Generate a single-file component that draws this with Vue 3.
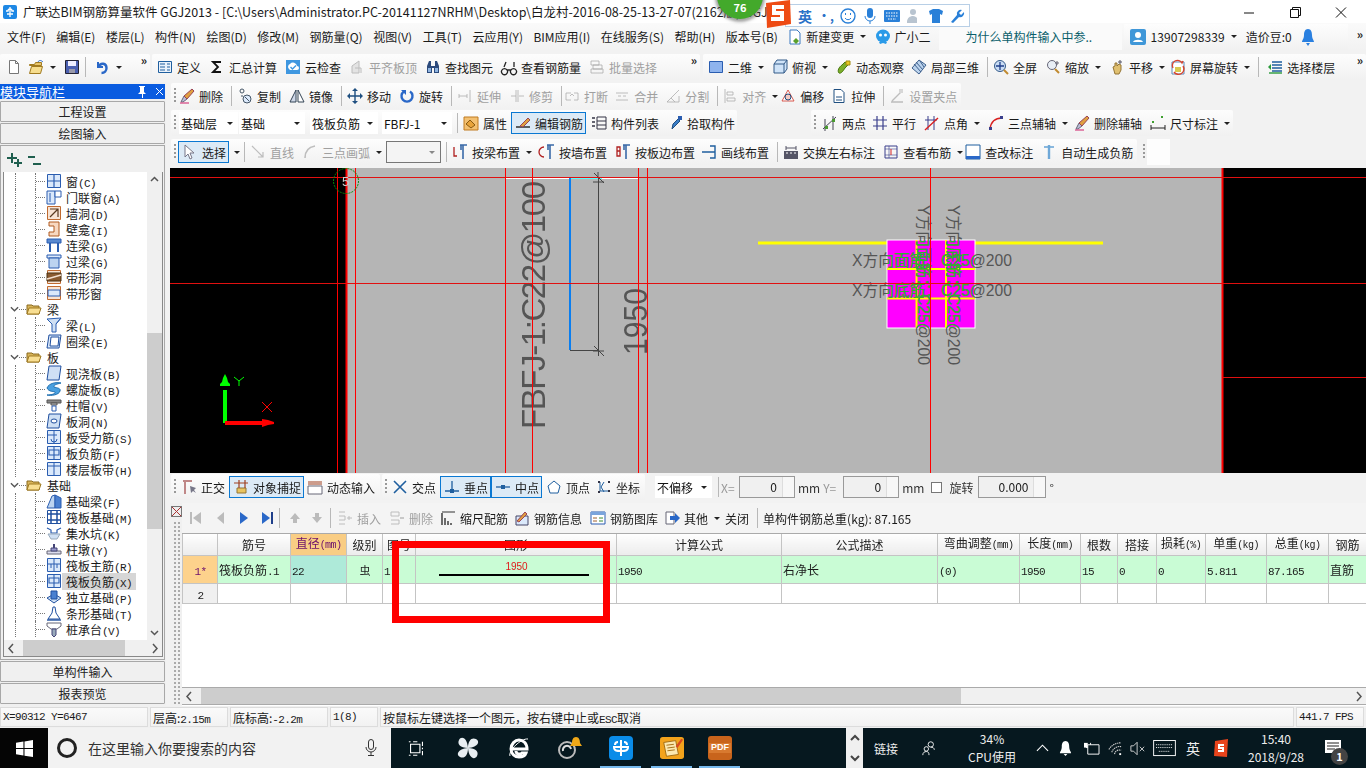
<script setup>
import { h } from 'vue'

// 16x16 icon bodies, kept as strings so the toolbars can be plain data
const ln = (d, c = '#335', w = 1) => `<path d="${d}" fill="none" stroke="${c}" stroke-width="${w}"/>`
const fl = (d, c, s = 'none') => `<path d="${d}" fill="${c}" stroke="${s}"/>`

const icons = {
  newdoc: fl('M3.5 1.5h6l3 3v10h-9z', '#fff', '#777') + ln('M9.5 1.5v3h3', '#777'),
  open: fl('M1.5 5.5h5l1-2h6v3h-12z', '#e8c46a', '#a07a20') + fl('M1.5 14.5l2-7h11l-2 7z', '#f6dd8e', '#a07a20') + ln('M10 3c1-2 3-2 5 0', '#2a68c8'),
  save: fl('M1.5 1.5h13v13h-13z', '#4a5fb0', '#223') + fl('M4 2h8v5H4z', '#eef') + fl('M5 10h6v4H5z', '#99a'),
  undo: ln('M4 3v5h5', '#2a68c8', 2) + ln('M4.5 8c2-5 8-4 8 1 0 3-2 5-5 5', '#2a68c8', 2.4),
  def: fl('M1.5 2.5h13v11h-13z', '#eaf2fb', '#1f5f9f') + ln('M3 5h5M3 8h5M3 11h5M10 5h3M10 8h3M10 11h3', '#1f5f9f'),
  sigma: ln('M12 3H4l5 5-5 5h8', '#111', 1.8),
  cloud: fl('M1 1h14v14H1z', '#3f97e0') + fl('M4 10a3 3 0 0 1 1-5 4 4 0 0 1 7 2 2 2 0 0 1 0 4H5z', '#fff') + ln('M5.5 8l2 2 3.5-3.5', '#3f97e0', 1.4),
  flat: fl('M3 7l7-5v12H3z', '#ddd', '#aaa') + ln('M6 9h6v5', '#aaa'),
  binoc: fl('M2 7l2-5h2v5h4V2h2l2 5v7H9V9H7v5H2z', '#2c4a7c') + fl('M3 9h3v4H3zM10 9h3v4h-3z', '#8fb4e0'),
  glass: ln('M1 11a3 3 0 1 0 5 0 3 3 0 0 0-5 0M10 11a3 3 0 1 0 5 0 3 3 0 0 0-5 0M6 11h4M3 8l2-5M13 8V3', '#222', 1.3),
  batch: ln('M2 2h8v4H2zM4 6h9v4H4zM2 10h12v4H2z', '#aaa'),
  two: fl('M1.5 2.5h13v11h-13z', '#8fb4ee', '#2a5db0'),
  top: fl('M2 5l3-4h10v9l-3 4H2z', '#cfe3f8', '#335a88') + ln('M2 5h10v9M12 5l3-4', '#335a88'),
  orbit: fl('M3 14c-2-2 0-6 3-8l3-3 3 3-3 3c-2 3-4 6-6 5z', '#7cae2a', '#4a7a10') + fl('M10 2h4v4h-4z', '#e8c820', '#a08a10'),
  local: fl('M8 1l7 5-7 9-7-6z', '#bcd4ee', '#3d5f8c') + ln('M5 3l7 8M9 2l4 6M3 5l7 8', '#3d5f8c'),
  full: `<circle cx="7" cy="7" r="5.5" fill="#c9dcf4" stroke="#335a88"/>` + ln('M7 3v8M3 7h8', '#1f3f8a', 1.3) + ln('M11 11l4 4', '#c08a30', 2),
  zoom: `<circle cx="7" cy="6" r="4.5" fill="#e8eef6" stroke="#667"/>` + ln('M10 10l4 4', '#c08a30', 2) + ln('M12 2v4M10 4h4', '#667'),
  pan: fl('M4 8l2-1V4l2 0v3l2-2 2 1v5l-2 4H6z', '#e0c070', '#947434') + ln('M11 1v4M9 3h4', '#556'),
  rot: fl('M2 3h12v12H2z', '#fff', '#5b88b8') + fl('M5 8h6v5H5z', '#d8c850') + ln('M3 9a5 5 0 0 1 9-5l1-2M13 7a5 5 0 0 1-9 6', '#d8432c', 1.4),
  floor: ln('M5 3h10M5 6h10M5 9h10M5 12h10', '#1f5f9f', 1.6) + fl('M1 8l3-3v6z', '#2a9a3a') + ln('M2 14h13', '#2a9a3a', 1.4),
  erase: fl('M2 14l3-6 3 3-4 3z', '#b9bcd8', '#667') + fl('M5 8l8-7 2 2-7 8z', '#e0a040', '#945') + ln('M1 15h9', '#d85a90', 1.4),
  copy: `<circle cx="5" cy="3" r="2" fill="none" stroke="#456"/><circle cx="10" cy="11" r="4" fill="#dbe9fb" stroke="#456"/>` + ln('M8 9l4 4M4 8h2', '#456'),
  mirror: fl('M7 2v12H1z', '#cfd8e8', '#345') + fl('M9 2v12h6z', '#fff', '#345'),
  move: ln('M8 1v14M1 8h14', '#1f4f80', 1.4) + fl('M8 0l3 3H5zM8 16l3-3H5zM0 8l3-3v6zM16 8l-3-3v6z', '#1f4f80'),
  rotate: ln('M5 3.5a5.5 5.5 0 1 0 6 0', '#2a68c8', 2.4) + fl('M2 2h5v5z', '#2a68c8'),
  extend: ln('M2 8h8M13 2v12M10 6v4M2 6v4', '#aaa'),
  trim: ln('M2 8h5M10 8h5M7 2v12M9 2v12', '#aaa'),
  brk: ln('M2 5h5M10 5h4M2 12h5M10 12h4M2 5v7M14 5v7M6 8l2-2 2 2', '#aaa'),
  merge: ln('M2 5h12M2 12h12M4 8h3M9 8h3', '#aaa'),
  split: ln('M2 14L14 2M2 14h12v-6M6 10l4 4', '#aaa'),
  align: ln('M3 1v14M5 4h6v3H5zM5 10h8v3H5z', '#aaa'),
  offset: fl('M8 2l6 11H2z', '#fff', '#d85a50') + `<circle cx="8" cy="9" r="3" fill="#f4c8c0" stroke="#1f4f80"/>`,
  stretch: fl('M3 1.5h7l3 3v10H3z', '#fff', '#1f4f80') + ln('M5 9h6M5 12h6', '#1f4f80', 1),
  grips: ln('M3 13L13 3M2 14h12', '#aaa', 1.4) + fl('M10 1h4v4h-4z', '#ccc'),
  attr: fl('M1 2h14v13H1z', '#f3c071', '#c07a20') + fl('M3 9l4-4 5 5-4 3z', '#e8a33a', '#8a5a10'),
  editbar: ln('M1 12h14', '#222', 1.4) + fl('M5 11l8-8 2 2-7 7z', '#e0a040', '#945'),
  list: ln('M6 2h9v12H6zM6 6h9M6 10h9', '#334') + ln('M1 3h3M1 7h3M1 11h3', '#334', 1.6),
  pick: fl('M6 9l5-5 2 2-5 5-3 3z', '#3b7ec8', '#1f4f80') + fl('M11 1h4v4h-4z', '#2a5db0'),
  twopt: ln('M1 14L14 2M11 1v14M3 4v12', '#445') + fl('M3 11h3v3H3zM10 4h3v3h-3z', '#4a9a30'),
  parallel: ln('M1 5h14M1 11h14M5 1v14M11 1v14', '#3a3f8c', 1.2),
  angle: ln('M1 5h12M4 1v14M10 1v14', '#3a3f8c') + ln('M1 15L14 3', '#d82020', 1.4),
  arc3: ln('M2 14C3 6 8 3 14 3', '#d82020', 1.4) + fl('M1 12h3v3H1zM12 1h3v3h-3z', '#3a3f8c'),
  dim: ln('M1 13h14M1 10v5M15 10v5', '#222') + fl('M2 6h2v2H2zM11 1h2v2h-2z', '#3fa030'),
  pointer: fl('M3 1v12l3-3 2 5 2-1-2-5h4z', '#fff', '#778'),
  lineg: ln('M2 2l11 11M13 8v5H8', '#aaa', 1.2),
  arcg: ln('M3 14C3 7 7 3 13 2', '#aaa', 1.6),
  beamb: ln('M2 3v9h3', '#b02020', 1.3) + ln('M8 1h7M11 1v14M9 1v5', '#3a6aa8', 1.6),
  wallb: ln('M5 3a5 5 0 0 0 0 10', '#b02020', 1.3) + ln('M8 1h7M11 1v14M9 1v5', '#3a6aa8', 1.6),
  plateb: ln('M2 3h3v9H2zM2 7h3', '#b02020', 1.3) + ln('M8 1h7M11 1v14M9 1v5', '#3a6aa8', 1.6),
  lineb: ln('M1 8h13M9 2h5v12H9', '#1f5f9f', 1.4),
  swap: fl('M1 7h14v8H1z', '#556') + ln('M3 9h2M7 9h2M11 9h2', '#fff') + ln('M3 4h10M3 2v4M13 2v4', '#556'),
  see: ln('M2 2h12v12H2z', '#3a3f8c') + ln('M2 5h12M2 11h12M6 2v12', '#3a3f8c', .6) + ln('M8 5v6', '#d82020'),
  abc: fl('M1 1h14v14H1z', '#fff', '#1f5f9f') + fl('M1 12h14v3H1z', '#2a68c8'),
  auto: ln('M8 1v14', '#6fa8d8', 2.4) + ln('M3 3h10', '#6fa8d8', 1.6),
  ortho: ln('M2 2h9M4 2v13', '#c08888', 2) + fl('M9 7l1 7 2-2 3 2-2-3 2-2z', '#778'),
  snap: fl('M4 9h9v5H4z', '#e8c460', '#947434') + ln('M6 1v8M12 1v8M1 4h14', '#a04020', 1.2),
  dyn: ln('M1 3h14M1 5h14', '#a04020', 1.2) + fl('M1 7h14v8H1z', '#fff', '#667'),
  cross: ln('M2 2l12 12M14 2L2 14', '#1f5f9f', 1.6),
  perp: ln('M8 2v10M1 12h14', '#1f5f9f', 1.3) + fl('M6 10h4v4H6z', '#1f5f9f'),
  mid: ln('M1 8h14', '#1f5f9f', 1.3) + fl('M6 6h4v4H6z', '#1f5f9f'),
  vertex: fl('M8 2l6 5-2 7H4L2 7z', '#fff', '#1f5f9f'),
  coord: ln('M4 3v9h9M8 3l-3 5 3 5', '#1f5f9f') + fl('M2 2h2v2H2zM12 2h2v2h-2zM12 11h2v2h-2zM2 12h2v2H2z', '#334'),
  first: fl('M13 2v12L5 8z', '#bbb') + fl('M2 2h2v12H2z', '#bbb'),
  prev: fl('M12 2v12L5 8z', '#bbb'),
  next: fl('M4 2v12l8-6z', '#2a68c8'),
  last: fl('M2 2v12l8-6z', '#2a68c8') + fl('M11 2h2v12h-2z', '#1f3f8a'),
  up: fl('M8 3l5 6H10v4H6V9H3z', '#bbb'),
  down: fl('M8 13L3 7h3V3h4v4h3z', '#bbb'),
  ins: ln('M2 2h6M2 14h6M2 6h6v4H2', '#aaa') + ln('M10 8h5M12 6v4', '#aaa'),
  del: ln('M2 2h8v4H2zM2 10h8v4H2', '#aaa') + ln('M11 8h4', '#aaa', 1.6),
  scale: ln('M2 3v12M5 8v7M8 11v4M11 13v2', '#333', 1.4) + ln('M2 2h13', '#333', 1),
  info: fl('M2 6h12v9H2z', '#dbe9fb', '#446') + fl('M3 11l8-9 2 2-8 8z', '#e0a040', '#945'),
  lib: fl('M1 2h14v12H1z', '#fff', '#2a5db0') + fl('M1 2h14v3H1z', '#7aa4dc') + ln('M3 8h4M3 11h4', '#a06030') + ln('M9 8h4M9 11h4', '#3a8a30'),
  other: fl('M2 2h8v12H2z', '#fff', '#667') + fl('M6 6h5V3l5 5-5 5v-3H6z', '#2a68c8')
}

// one toolbar item: tool, separator, grip, combo or caret
const renderItem = (it) => {
  if (it === '|') return h('i', { class: 'sep' })
  if (it === ':') return h('i', { class: 'grip' })
  if (it === 'v') return h('i', { class: 'caret solo' })
  if (it === '»') return h('span', { class: 'band-more' }, '»')
  if (it.combo !== undefined) {
    return h('span', { class: ['combo', it.cls], style: { width: it.w + 'px', marginLeft: (it.ml || 0) + 'px' } }, [it.combo, h('i', { class: 'caret' })])
  }
  const style = {}
  if (it.ml) style.marginLeft = it.ml + 'px'
  if (it.mr !== undefined) style.marginRight = it.mr + 'px'
  return h('span', { class: ['tool', { on: it.on, off: it.off, bare: !it.t }], style }, [
    it.i ? h('svg', { class: 'ic', viewBox: '0 0 16 16', innerHTML: icons[it.i] }) : null,
    it.t ? h('span', { class: 'tx' }, it.t) : null,
    it.c ? h('i', { class: 'caret' }) : null
  ])
}
const Band = (props) => h('div', { class: ['band', props.cls], style: { width: props.w + 'px', marginLeft: (props.ml || 0) + 'px' } }, props.items.map(renderItem))

const row1a = [{ i: 'newdoc' }, { i: 'open', mr: 6 }, 'v', { i: 'save', mr: 5 }, '|', { i: 'undo', ml: 3, mr: 6 }, 'v', '»']
const row1b = [
  { i: 'def', t: '定义', ml: 2 }, { i: 'sigma', t: '汇总计算' }, { i: 'cloud', t: '云检查' }, { i: 'flat', t: '平齐板顶', off: 1 },
  { i: 'binoc', t: '查找图元' }, { i: 'glass', t: '查看钢筋量' }, { i: 'batch', t: '批量选择', off: 1 }, '»'
]
const row1c = [
  { i: 'two', t: '二维', c: 1, ml: 2 }, { i: 'top', t: '俯视', c: 1 }, { i: 'orbit', t: '动态观察' }, { i: 'local', t: '局部三维', ml: -1 }, '|',
  { i: 'full', t: '全屏' }, { i: 'zoom', t: '缩放', c: 1 }, { i: 'pan', t: '平移', c: 1 }, { i: 'rot', t: '屏幕旋转', c: 1, ml: -3 }, '|', { i: 'floor', t: '选择楼层', ml: 3 }, '»'
]
const row2 = [
  ':', { i: 'erase', t: '删除' }, '|', { i: 'copy', t: '复制' }, { i: 'mirror', t: '镜像' }, '|', { i: 'move', t: '移动' }, { i: 'rotate', t: '旋转' }, '|',
  { i: 'extend', t: '延伸', off: 1 }, { i: 'trim', t: '修剪', off: 1 }, '|', { i: 'brk', t: '打断', off: 1, ml: -3 }, { i: 'merge', t: '合并', off: 1, ml: -2 }, { i: 'split', t: '分割', off: 1, ml: -1 }, '|',
  { i: 'align', t: '对齐', off: 1, c: 1, ml: -1 }, { i: 'offset', t: '偏移', ml: -6 }, { i: 'stretch', t: '拉伸', ml: -1 }, '|', { i: 'grips', t: '设置夹点', off: 1 }
]
const row3a = [
  ':', { combo: '基础层', w: 59 }, { combo: '基础', w: 66, ml: 1 }, { combo: '筏板负筋', w: 68, ml: 5 }, { combo: 'FBFJ-1', w: 70, ml: 4 }, '|',
  { i: 'attr', t: '属性' }, { i: 'editbar', t: '编辑钢筋', on: 1 }, { i: 'list', t: '构件列表' }, { i: 'pick', t: '拾取构件' }
]
const row3b = [
  ':', { i: 'twopt', t: '两点', ml: 3 }, { i: 'parallel', t: '平行', ml: -2 }, { i: 'angle', t: '点角', c: 1 }, { i: 'arc3', t: '三点辅轴', c: 1 }, { i: 'erase', t: '删除辅轴', ml: -2 }, { i: 'dim', t: '尺寸标注', c: 1 }
]
const row4 = [
  ':', { i: 'pointer', t: '选择', on: 1, ml: -1, mr: 5 }, 'v', '|', { i: 'lineg', t: '直线', off: 1 }, { i: 'arcg', t: '三点画弧', off: 1, c: 1 }, { combo: '', w: 55, cls: 'boxed', ml: -4 }, '|',
  { i: 'beamb', t: '按梁布置', c: 1 }, { i: 'wallb', t: '按墙布置', ml: -1 }, { i: 'plateb', t: '按板边布置' }, { i: 'lineb', t: '画线布置', ml: -2 }, '|',
  { i: 'swap', t: '交换左右标注' }, { i: 'see', t: '查看布筋', c: 1 }, { i: 'abc', t: '查改标注', ml: -6 }, { i: 'auto', t: '自动生成负筋' }
]
const snapA = [':', { i: 'ortho', t: '正交', ml: 2 }, { i: 'snap', t: '对象捕捉', on: 1 }, { i: 'dyn', t: '动态输入', ml: -2 }]
const snapB = [':', { i: 'cross', t: '交点', ml: 2 }, { i: 'perp', t: '垂点', on: 1 }, { i: 'mid', t: '中点', on: 1, ml: -5 }, { i: 'vertex', t: '顶点', ml: -1 }, { i: 'coord', t: '坐标', ml: -2 }]
const tableTools = [
  { i: 'first' }, { i: 'prev' }, { i: 'next' }, { i: 'last', mr: 3 }, '|', { i: 'up', ml: 2 }, { i: 'down', ml: -2, mr: 5 }, '|',
  { i: 'ins', t: '插入', off: 1, ml: 1 }, { i: 'del', t: '删除', off: 1 }, { i: 'scale', t: '缩尺配筋', ml: -1 }, { i: 'info', t: '钢筋信息', ml: -2 }, { i: 'lib', t: '钢筋图库' }, { i: 'other', t: '其他', c: 1, ml: -2 }, { t: '关闭', ml: -3 }, '|', { t: '单构件钢筋总重(kg): 87.165' }
]

const menus = ['文件(F)', '编辑(E)', '楼层(L)', '构件(N)', '绘图(D)', '修改(M)', '钢筋量(Q)', '视图(V)', '工具(T)', '云应用(Y)', 'BIM应用(I)', '在线服务(S)', '帮助(H)', '版本号(B)']

// tree icons in the blue / orange drawing style of the module list
const tb = (body) => fl('M1.5 1.5h13v13h-13z', '#dbe9fb', '#2a5db0') + body
const to = (body) => fl('M1.5 1.5h13v13h-13z', '#f8e4d4', '#c06a30') + body
const treeIcons = {
  win: tb(ln('M8 2v12M2 8h12', '#2a5db0', 1.2)),
  doorwin: fl('M1 2h8v13H1z', '#dbe9fb', '#2a5db0') + fl('M9 2h6v6H9z', '#fff', '#2a5db0') + ln('M4 4v9', '#2a5db0'),
  wallhole: to(ln('M4 12L12 4M4 4h8v8', '#5a3a20', 1.2)),
  niche: fl('M3 1h10v14H3V11h5V5H3z', '#f8d8c0', '#b05a20'),
  link: fl('M1 2h14v4H1z', '#5a8ad0', '#2a5db0') + ln('M4 6v9M12 6v9', '#2a5db0', 2),
  lintel: fl('M1 2h14v3H1z', '#dbe9fb', '#2a5db0') + fl('M3 5h10v10H3z', '#bcd4f0', '#2a5db0'),
  striph: to(fl('M1 4h14v8H1z', '#8a5a30', '#4a3010') + ln('M1 10L15 6', '#f4e0d0', 1.5)),
  stripw: to(fl('M2 5h12v6H2z', '#dbe9fb', '#2a5db0')),
  beam: fl('M1 2l14-1-5 6v8H6V7z', '#cfe0f4', '#2a5db0') + ln('M6 7L1 2M10 7l5-6', '#2a5db0'),
  ring: fl('M3 2h12l-2 13H1z', '#dbe9fb', '#1f4f9f') + fl('M5 4h8l-1 9H4z', '#fff', '#1f4f9f'),
  slab: fl('M3 1h12l-2 14H1z', '#cfe0f4', '#1f4f9f'),
  spiral: fl('M1 7c2-5 9-6 14-5-4 1-8 2-7 4 3 1 7 1 6 4-1 4-9 5-13 4 4 0 9-1 8-3-2-1-6 0-8-4z', '#4aa0e0', '#1f6fb0'),
  cap: fl('M1 3h14v3H1z', '#888', '#555') + fl('M5 6h6v2H5z', '#bbb', '#555') + fl('M6 9h4v5H6z', '#fff', '#2a5db0'),
  slabhole: fl('M3 1h12l-2 14H1z', '#cfe0f4', '#1f4f9f') + `<ellipse cx="8" cy="8" rx="3" ry="2" fill="#fff" stroke="#1f4f9f"/>`,
  force: tb(ln('M8 2v12M2 6h9', '#2a5db0') + ln('M5 10a3 3 0 0 0 6 0', '#2a5db0')),
  neg: tb(ln('M8 2v12M3 5h10v5H3z', '#2a5db0', 1.1)),
  band: tb(ln('M2 5h12M8 2v12', '#2a5db0')),
  fbeam: fl('M1 15l5-12 3-1v13z', '#bcd4f0', '#2a5db0') + fl('M9 2l6 3v10H9z', '#4a80d0', '#2a5db0'),
  raft: fl('M1.5 1.5h13v13h-13z', '#fff', '#1f4f9f') + ln('M5 2v12M11 2v12M2 5h12M2 11h12', '#1f4f9f', 1.5),
  sump: ln('M1 3l4 2v3h6V5l4-2', '#2a5db0', 1.2) + fl('M2 9h12l-3 5H5z', '#cfe0f4', '#9ab'),
  pier: fl('M1 10h14v3H1z', '#dde', '#667') + fl('M5 7h6v3H5z', '#99c', '#447') + fl('M7 3h2v4H7z', '#447'),
  main: tb(ln('M8 2v12M2 7h12M5 7v4M11 7v4', '#2a5db0')),
  iso: fl('M1 9l7-4 7 4-7 5z', '#cfe0f4', '#1f4f9f') + fl('M5 2h6v8H5z', '#4a80d0', '#1f4f9f'),
  cont: fl('M2 14l4-6 1-6h2l1 6 4 6z', '#fff', '#1f4f9f') + ln('M1 15h14', '#1f4f9f', 1.4),
  pile: fl('M1 2h14v3l-4 3H5L1 5z', '#fff', '#667') + fl('M6 8h4v6l-2 2-2-2z', '#9ab', '#447')
}

const tree = [
  { t: '窗', c: '(C)', i: 'win' }, { t: '门联窗', c: '(A)', i: 'doorwin' }, { t: '墙洞', c: '(D)', i: 'wallhole' }, { t: '壁龛', c: '(I)', i: 'niche' },
  { t: '连梁', c: '(G)', i: 'link' }, { t: '过梁', c: '(G)', i: 'lintel' }, { t: '带形洞', i: 'striph' }, { t: '带形窗', i: 'stripw' },
  { t: '梁', folder: 1 }, { t: '梁', c: '(L)', i: 'beam' }, { t: '圈梁', c: '(E)', i: 'ring' },
  { t: '板', folder: 1 }, { t: '现浇板', c: '(B)', i: 'slab' }, { t: '螺旋板', c: '(B)', i: 'spiral' }, { t: '柱帽', c: '(V)', i: 'cap' }, { t: '板洞', c: '(N)', i: 'slabhole' },
  { t: '板受力筋', c: '(S)', i: 'force' }, { t: '板负筋', c: '(F)', i: 'neg' }, { t: '楼层板带', c: '(H)', i: 'band' },
  { t: '基础', folder: 1 }, { t: '基础梁', c: '(F)', i: 'fbeam' }, { t: '筏板基础', c: '(M)', i: 'raft' }, { t: '集水坑', c: '(K)', i: 'sump' }, { t: '柱墩', c: '(Y)', i: 'pier' },
  { t: '筏板主筋', c: '(R)', i: 'main' }, { t: '筏板负筋', c: '(X)', i: 'neg', sel: 1 }, { t: '独立基础', c: '(P)', i: 'iso' }, { t: '条形基础', c: '(T)', i: 'cont' }, { t: '桩承台', c: '(V)', i: 'pile' }
]

const cols = [35, 73, 56, 36, 33, 201, 165, 156, 82, 61, 37, 39, 49, 61, 62, 38]
const heads = [
  [''], ['筋号'], ['直径', '(mm)'], ['级别'], ['图号'], ['图形'], ['计算公式'], ['公式描述'], ['弯曲调整', '(mm)'], ['长度', '(mm)'],
  ['根数'], ['搭接'], ['损耗', '(%)'], ['单重', '(kg)'], ['总重', '(kg)'], ['钢筋']
]
const emptyCols = 14

const canvasV = [337, 355, 505, 532, 638, 647, 930]
const tasks = [
  { k: 'view' }, { k: 'fan' }, { k: 'ie' }, { k: 'bird' }, { k: 'blue', on: 1 }, { k: 'note', on: 1 }, { k: 'pdf', on: 1 }
]
</script>

<template>
  <div class="screen">
    <header class="titlebar">
      <svg class="logo" viewBox="0 0 14 14"><rect width="14" height="14" rx="2" fill="#1e88e5" /><path d="M7 2v10M3 6h2a2 2 0 0 1 4 0h2M4 9h6" fill="none" stroke="#fff" stroke-width="1.3" /></svg>
      <span class="title-text">广联达BIM钢筋算量软件 GGJ2013 - [C:\Users\Administrator.PC-20141127NRHM\Desktop\白龙村-2016-08-25-13-27-07(2162版).GGJ12]</span>
      <div class="winctl">
        <svg viewBox="0 0 46 23"><path d="M18 13h10" stroke="#111" /></svg>
        <svg viewBox="0 0 46 23"><path d="M18.5 9.5h8v8h-8zM20.5 9V7.5h8v8H27" fill="none" stroke="#111" /></svg>
        <svg viewBox="0 0 46 23"><path d="M18 7.5l10 10M28 7.5l-10 10" stroke="#111" /></svg>
      </div>
    </header>

    <nav class="menubar">
      <span v-for="m in menus" :key="m" class="menu">{{ m }}</span>
      <span class="menu-icon first">
        <svg class="ic" viewBox="0 0 16 16"><path d="M3 1h7l3 3v11H3z" fill="#fff" stroke="#3a78c0" /><path d="M9 9l3 3-3 3-3-3z" fill="#5aa02c" /></svg>新建变更<i class="caret" />
      </span>
      <span class="menu-icon">
        <svg class="ic" viewBox="0 0 16 16"><ellipse cx="8" cy="7" rx="7" ry="6.5" fill="#2a9ae8" /><circle cx="5.5" cy="6" r="1.5" fill="#fff" /><circle cx="10.5" cy="6" r="1.5" fill="#fff" /><path d="M4 13l1 2 3-1 3 1 1-2" fill="#2a9ae8" /></svg>广小二
      </span>
      <span class="ask">为什么单构件输入中参..</span>
      <span class="user-box">
        <svg class="ic" viewBox="0 0 16 16"><rect width="16" height="16" rx="2" fill="#3f97d8" /><circle cx="8" cy="6" r="3" fill="#fff" /><path d="M3 13c1-3 9-3 10 0z" fill="#fff" /></svg>
        <span class="phone">13907298339</span><i class="caret" />
        <span class="beans">造价豆:0</span>
        <svg class="bell" viewBox="0 0 12 18"><path d="M6 1c3 0 4 3 4 6 0 4 2 5 2 7H0c0-2 2-3 2-7 0-3 1-6 4-6z" fill="#2a80e0" /><path d="M4 15h4l-2 3z" fill="#2a80e0" /></svg>
      </span>
      <span class="more">»</span>
    </nav>

    <div class="toolrow row1">
      <Band :items="row1a" :w="150" cls="b1a" />
      <Band :items="row1b" :w="548" :ml="2" />
      <Band :items="row1c" :w="663" :ml="3" />
    </div>

    <div class="workspace">
      <aside class="nav">
        <div class="nav-title">模块导航栏
          <svg viewBox="0 0 30 15"><path d="M4 2h6v1H9v5l2 2H8v4H7v-4H3l2-2V3H4z" fill="#fff" /><path d="M21 4l7 7M28 4l-7 7" stroke="#fff" /></svg>
        </div>
        <div class="nav-btn">工程设置</div>
        <div class="nav-btn">绘图输入</div>
        <div class="tree-panel">
          <div class="tree-head">
            <svg viewBox="0 0 44 18"><path d="M2 6h4V2h2v4h4v2H8v4H6V8H2zM9 11h3V8h2v3h3v2h-3v3h-2v-3H9z" fill="#1f5f4f" /><path d="M23 5h7v2h-7zM28 12h8v2h-8z" fill="#1f5f4f" /></svg>
          </div>
          <div class="tree-body">
            <div class="tree-list">
              <div class="tree-clip">
                <div v-for="(n, idx) in tree" :key="idx" class="tree-row" :class="{ folder: n.folder }">
                  <template v-if="n.folder">
                    <svg class="chev" viewBox="0 0 10 6"><path d="M1 1l4 4 4-4" fill="none" stroke="#555" stroke-width="1.5" /></svg>
                    <span class="dots short" />
                    <svg class="ic" viewBox="0 0 16 16"><path d="M1 4h5l1 1h6v8H1z" fill="#d8b45a" stroke="#8a6a20" /><path d="M1 13l2-6h12l-2 6z" fill="#f8de92" stroke="#a07a20" /></svg>
                    <span class="tree-folder">{{ n.t }}</span>
                  </template>
                  <template v-else>
                    <span class="guide" />
                    <span class="guide dash" />
                    <svg class="ic" viewBox="0 0 16 16" v-html="treeIcons[n.i]" />
                    <span class="tree-label" :class="{ sel: n.sel }">{{ n.t }}<span class="mono">{{ n.c }}</span></span>
                  </template>
                </div>
              </div>
              <div class="vscroll">
                <svg viewBox="0 0 15 15"><path d="M4 9l3.500-3.500L11 9" fill="none" stroke="#555" stroke-width="1.5" /></svg>
                <div class="vtrack"><div class="vthumb" /></div>
                <svg viewBox="0 0 15 15"><path d="M4 6l3.500 3.500L11 6" fill="none" stroke="#555" stroke-width="1.500" /></svg>
              </div>
            </div>
            <div class="hscroll tree-h">
              <svg viewBox="0 0 15 15"><path d="M9 3L5 7.500 9 12" fill="none" stroke="#555" stroke-width="1.500" /></svg>
              <div class="htrack"><div class="hthumb" /></div>
              <svg viewBox="0 0 15 15"><path d="M6 3l4 4.500L6 12" fill="none" stroke="#555" stroke-width="1.500" /></svg>
            </div>
          </div>
        </div>
        <div class="nav-btn">单构件输入</div>
        <div class="nav-btn">报表预览</div>
      </aside>

      <main class="main">
        <div class="toolrow row2"><Band :items="row2" :w="790" :ml="1" /></div>
        <div class="toolrow row3">
          <Band :items="row3a" :w="566" :ml="1" />
          <Band :items="row3b" :w="422" :ml="74" />
        </div>
        <div class="toolrow row4">
          <Band :items="row4" :w="966" :ml="1" />
          <div class="tail-grip"><i class="grip" /><span /></div>
        </div>

        <svg class="canvas" viewBox="170 168 1196 305">
          <defs>
            <clipPath id="magenta-box"><rect x="887" y="240" width="88" height="88" /></clipPath>
            <g id="plan-notes">
              <text x="852" y="266" font-size="16" textLength="160" lengthAdjust="spacingAndGlyphs">X方向面筋：C25@200</text>
              <text x="852" y="296" font-size="16" textLength="160" lengthAdjust="spacingAndGlyphs">X方向底筋：C25@200</text>
              <text transform="translate(918 205) rotate(90)" font-size="16" textLength="160" lengthAdjust="spacingAndGlyphs">Y方向面筋：C25@200</text>
              <text transform="translate(948 205) rotate(90)" font-size="16" textLength="160" lengthAdjust="spacingAndGlyphs">Y方向底筋：C25@200</text>
            </g>
          </defs>
          <rect x="170" y="168" width="1196" height="305" fill="#000" />
          <rect x="346" y="168" width="876" height="305" fill="#b5b5b5" />

          <path d="M505 178.500h65M600 178.500h38" stroke="#fff" fill="none" />
          <path d="M570 178.500h32" stroke="#5ff" fill="none" />
          <path d="M570 178v172" stroke="#0a7ef0" stroke-width="2" fill="none" />
          <path d="M570 350.500h28M598.500 178v178" stroke="#444" fill="none" />
          <path d="M594 173l10 10M594 346l10 10M593 182h11M593 351h11M598 172v6" stroke="#444" fill="none" />

          <g class="plan-text big">
            <text transform="translate(545 429) rotate(-90)" font-size="33" textLength="248" lengthAdjust="spacing">FBFJ-1:C22@100</text>
            <text transform="translate(647 355) rotate(-90)" font-size="33" textLength="67" lengthAdjust="spacingAndGlyphs">1950</text>
          </g>

          <path d="M758 243h345" stroke="#ff0" stroke-width="3" />
          <rect x="887" y="240" width="88" height="88" fill="#f0f" stroke="#fff" />
          <path d="M887 269h88M887 298.500h88M916.500 240v88M946 240v88" stroke="#ff0" stroke-width="2" />
          <use href="#plan-notes" class="plan-text" fill="#555" />
          <use href="#plan-notes" class="plan-over" clip-path="url(#magenta-box)" />

          <path d="M170 177.500h1196M170 283.500h1196M1222 377.500h144" stroke="#e01010" fill="none" />
          <path v-for="x in canvasV" :key="x" :d="`M${x + 0.5} 168v305`" stroke="#f00" fill="none" />
          <path d="M346.500 168v305M1222.500 168v305" stroke="#f00" stroke-width="2" fill="none" />

          <circle cx="346" cy="181" r="12.500" fill="none" stroke="#0a8a0a" stroke-dasharray="2 1" />
          <text x="342" y="186" font-size="13" fill="#ccc" class="plan-label">5</text>

          <path d="M225 423V390" stroke="#0f0" stroke-width="4" />
          <path d="M225 374l2 4 1 4 2 2v2h-10v-2l2-2 1-4z" fill="#0f0" />
          <path d="M225 423h40" stroke="#f00" stroke-width="4" />
          <path d="M262 419l6 1 6 2 0 2-6 1-6 2z" fill="#f00" />
          <path d="M234 377l5 4 5-4M239 381v5" stroke="#0f0" fill="none" />
          <path d="M262 402l10 10M272 402l-10 10" stroke="#f00" fill="none" />
        </svg>

        <div class="toolrow snapbar">
          <Band :items="snapA" :w="209" :ml="1" />
          <Band :items="snapB" :w="263" :ml="2" />
          <span class="combo flat">不偏移<i class="caret" /></span>
          <i class="sep" />
          <span class="grey">X=</span>
          <span class="spin w56"><b>0</b><em /></span><span class="unit">mm</span>
          <span class="grey tight">Y=</span>
          <span class="spin w56"><b>0</b><em /></span><span class="unit">mm</span>
          <i class="check" />
          <span class="unit wide">旋转</span>
          <span class="spin w68"><b>0.000</b><em /></span><span class="unit">°</span>
        </div>

        <section class="grid-area">
          <div class="side-strip">
            <svg viewBox="0 0 11 11"><rect x=".5" y=".5" width="10" height="10" fill="#eee" stroke="#777" /><path d="M1 1l9 9M10 1l-9 9" stroke="#a33" /></svg>
            <div class="strip-dots" />
          </div>
          <div class="grid-main">
            <div class="toolrow table-tools"><Band :items="tableTools" :w="1180" cls="plain" /></div>
            <div class="table-wrap">
              <table class="rebar">
                <colgroup><col v-for="(c, i) in cols" :key="i" :style="{ width: c + 'px' }" /></colgroup>
                <thead>
                  <tr>
                    <th v-for="(col, i) in heads" :key="i" :class="{ active: i === 2 }">{{ col[0] }}<span v-if="col[1]" class="mono unit-head">{{ col[1] }}</span></th>
                  </tr>
                </thead>
                <tbody>
                  <tr class="filled">
                    <td class="rowhead on"><span class="mono">1*</span></td>
                    <td>筏板负筋<span class="mono">.1</span></td>
                    <td class="cur"><span class="mono">22</span></td>
                    <td class="ctr"><span class="grade">虫</span></td>
                    <td><span class="mono">1</span></td>
                    <td class="shape"><div class="shape-label">1950</div><div class="shape-line" /></td>
                    <td><span class="mono">1950</span></td>
                    <td>右净长</td>
                    <td><span class="mono">(0)</span></td>
                    <td><span class="mono">1950</span></td>
                    <td><span class="mono">15</span></td>
                    <td><span class="mono">0</span></td>
                    <td><span class="mono">0</span></td>
                    <td><span class="mono">5.811</span></td>
                    <td><span class="mono">87.165</span></td>
                    <td>直筋</td>
                  </tr>
                  <tr class="blank">
                    <td class="rowhead"><span class="mono">2</span></td>
                    <td />
                    <td class="mark" />
                    <td v-for="n in emptyCols - 1" :key="n" />
                  </tr>
                </tbody>
              </table>
            </div>
            <div class="hscroll grid-h">
              <svg viewBox="0 0 15 15"><path d="M9 3L5 7.500 9 12" fill="none" stroke="#555" stroke-width="1.500" /></svg>
              <div class="htrack"><div class="hthumb" /></div>
              <svg viewBox="0 0 15 15"><path d="M6 3l4 4.500L6 12" fill="none" stroke="#555" stroke-width="1.500" /></svg>
            </div>
          </div>
        </section>
      </main>
    </div>

    <footer class="statusbar">
      <span class="cell c1 mono">X=90312 Y=6467</span>
      <span class="cell c2">层高:<span class="mono">2.15m</span></span>
      <span class="cell c3">底标高:<span class="mono">-2.2m</span></span>
      <span class="cell c4 mono">1(8)</span>
      <span class="cell c5">按鼠标左键选择一个图元，按右键中止或<span class="mono">ESC</span>取消</span>
      <span class="cell c6 mono">441.7 FPS</span>
    </footer>

    <div class="taskbar">
      <div class="start"><svg viewBox="0 0 16 16"><path d="M0 2.500l7-1V7.500H0zM8 1.300L16 0v7.500H8zM0 8.500h7v6l-7-1zM8 8.500h8V16l-8-1.200z" fill="#fff" /></svg></div>
      <div class="search">
        <span class="ring" />
        <span class="search-text">在这里输入你要搜索的内容</span>
        <svg viewBox="0 0 12 18"><rect x="3.500" y=".5" width="5" height="10" rx="2.500" fill="none" stroke="#333" /><path d="M1 8a5 5 0 0 0 10 0M6 13v3M3 16.500h6" fill="none" stroke="#333" /></svg>
      </div>
      <div v-for="t in tasks" :key="t.k" class="task" :class="[t.k, { running: t.on }]">
        <svg v-if="t.k === 'view'" viewBox="0 0 20 20"><path d="M3 5h11v10H3zM1 2h2M6 2h5M1 18h2M6 18h5M17 2v5M17 9v2M17 13v5" fill="none" stroke="#fff" stroke-width="1.300" /></svg>
        <svg v-else-if="t.k === 'fan'" viewBox="0 0 24 24"><path d="M12 12C4 12 1 8 3 4s8-3 9 8zM12 12c0-8 4-11 8-9s3 8-8 9zM12 12c8 0 11 4 9 8s-8 3-9-8zM12 12c0 8-4 11-8 9s-3-8 8-9z" fill="#e8eef2" /></svg>
        <svg v-else-if="t.k === 'ie'" viewBox="0 0 24 24"><path d="M5 13h15c0-6-4-9-8-9s-8 4-8 9 4 8 8 8c3 0 6-1 7-4h-4c-2 2-6 1-6-2" fill="none" stroke="#fff" stroke-width="3" /><path d="M3 20C1 15 14 2 21 3" fill="none" stroke="#fff" /></svg>
        <svg v-else-if="t.k === 'bird'" viewBox="0 0 28 24"><circle cx="11" cy="14" r="8" fill="none" stroke="#bbb" stroke-width="2" /><path d="M7 15a4 4 0 0 1 8-2" fill="none" stroke="#ddd" stroke-width="2" /><path d="M20 1c3 0 4 3 4 6l2 3H14l2-3c0-3 1-6 4-6z" fill="#f0a818" /></svg>
        <svg v-else-if="t.k === 'blue'" viewBox="0 0 24 24"><rect width="24" height="24" rx="4" fill="#0a8ce8" /><path d="M12 4v16M6 9a3 3 0 0 1 3-3M18 9a3 3 0 0 0-3-3M5 11h14c0 4-3 4-7 4s-7 0-7-4z" fill="none" stroke="#fff" stroke-width="2" /></svg>
        <svg v-else-if="t.k === 'note'" viewBox="0 0 26 24"><rect width="26" height="24" rx="3" fill="#f2a31c" /><path d="M4 6l13-2 3 15-13 2z" fill="#fbe8b0" stroke="#a06a10" /><path d="M7 9l8-1M8 12l8-1M8 15l8-1" stroke="#a06a10" /><path d="M17 10l6-8 2 1-6 9z" fill="#d84a20" /></svg>
        <svg v-else viewBox="0 0 24 24"><rect width="24" height="24" rx="3" fill="#c8641c" /><rect x="1" y="7" width="22" height="10" fill="#d87a30" /></svg>
        <span v-if="t.k === 'pdf'" class="pdf-tag">PDF</span>
      </div>
      <div class="tray">
        <div class="tray-up"><svg viewBox="0 0 12 12"><path d="M2 7l4-4 4 4" fill="none" stroke="#444" stroke-width="2" /></svg><svg viewBox="0 0 12 12"><path d="M2 5l4 4 4-4" fill="none" stroke="#444" stroke-width="2" /></svg></div>
        <span class="slot w46">链接</span>
        <span class="slot w40"><svg viewBox="0 0 18 18" width="16" height="18"><circle cx="11" cy="5" r="3" fill="none" stroke="#fff" /><circle cx="6" cy="10" r="2.500" fill="none" stroke="#fff" /><path d="M2 17c0-3 2-4 4-4s3 1 3 4M11 8c2 0 4 1 4 3" fill="none" stroke="#fff" /></svg></span>
        <span class="slot w86 cpu">34%<br />CPU使用</span>
        <span class="slot w15"><svg viewBox="0 0 14 14" width="13" height="14"><path d="M1 10l6-6 6 6" fill="none" stroke="#fff" stroke-width="1.200" /></svg></span>
        <span class="slot w30"><svg viewBox="0 0 14 18" width="13" height="17"><path d="M7 1c3 0 4 3 4 6 0 4 2 5 2 7H1c0-2 2-3 2-7 0-3 1-6 4-6zM5 15h4l-2 2z" fill="#fff" /></svg></span>
        <span class="slot w22"><svg viewBox="0 0 18 16" width="17" height="15"><path d="M5 4h12v10H5zM5 7h-2M8 2v2" fill="none" stroke="#fff" /><path d="M1 2v5h4V2z" fill="#fff" /></svg></span>
        <span class="slot w26"><svg viewBox="0 0 16 16" width="15" height="15"><path d="M1 9a14 14 0 0 1 13-7M4 12a9 9 0 0 1 10-6M7 14a5 5 0 0 1 7-4" fill="none" stroke="#ccc" stroke-dasharray="1.500 .7" stroke-width="1.200" /><path d="M12 13h2v2h-2z" fill="#fff" /></svg></span>
        <span class="slot w20"><svg viewBox="0 0 18 16" width="16" height="15"><path d="M1 5h3l4-4v14l-4-4H1zM11 6l5 5M16 6l-5 5" fill="none" stroke="#ddd" /></svg></span>
        <span class="slot w32"><svg viewBox="0 0 24 18" width="23" height="17"><rect x=".5" y=".5" width="23" height="16" fill="none" stroke="#fff" /><path d="M3 5h18M3 8h18M6 12h12" stroke="#fff" stroke-dasharray="1 1" /></svg></span>
        <span class="slot w26 ime">英</span>
        <span class="slot w30"><svg viewBox="0 0 16 18" width="16" height="18"><path d="M2 2l13-2-1 18-13-1z" fill="#e8441c" /><path d="M11 6H6v3h4v3H5" fill="none" stroke="#fff" stroke-width="2" /></svg></span>
        <span class="slot w80 clock">15:40<br />2018/9/28</span>
        <span class="slot w34 action">
          <svg viewBox="0 0 16 16" width="16" height="16"><path d="M0 0h16v13H0z" fill="#fff" /><path d="M2 3h12M2 6h12M2 9h8" stroke="#222" /></svg>
          <b class="badge">1</b>
        </span>
      </div>
    </div>

    <!-- floating input-method bar and ball over the title -->
    <div class="ball">76</div>
    <div class="ime-bar">
      <svg class="ime-s" viewBox="0 0 28 28"><path d="M2 3l24-3 1 24-24 4z" fill="#ee4b14" /><path d="M20 7H10v6h8v6H7" fill="none" stroke="#fff" stroke-width="4" /></svg>
      <b class="ime-en">英</b>
      <span class="ime-dot">•,</span>
      <svg viewBox="0 0 16 16"><circle cx="8" cy="8" r="7" fill="none" stroke="#2a80d8" stroke-width="1.400" /><path d="M5 10a3.500 3.500 0 0 0 6 0" fill="none" stroke="#2a80d8" /><path d="M5.500 5v2M10.500 5v2" stroke="#2a80d8" /></svg>
      <svg viewBox="0 0 16 16"><rect x="5" y="0" width="6" height="10" rx="3" fill="#2a80d8" /><path d="M3 8a5 5 0 0 0 10 0M8 13v3" fill="none" stroke="#2a80d8" /></svg>
      <svg viewBox="0 0 16 16"><rect y="2" width="16" height="12" rx="1" fill="#2a80d8" /><path d="M2 5h12M2 8h12M4 11h8" stroke="#fff" stroke-dasharray="1.500 1" /></svg>
      <svg viewBox="0 0 16 16"><circle cx="7" cy="4" r="3" fill="#b8c4d0" /><path d="M1 14c0-4 3-6 6-6 2 0 3 1 4 2v5H1z" fill="#b8c4d0" /></svg>
      <svg viewBox="0 0 16 16"><path d="M1 3l4-2h6l4 2-1 4-2-1v9H4V6L2 7z" fill="#2a80d8" /></svg>
      <svg viewBox="0 0 16 16"><path d="M1 14l6-7a4 4 0 0 1 5-5l-3 3 2 2 3-3a4 4 0 0 1-5 5l-6 6z" fill="#2a80d8" /></svg>
    </div>
    <div class="redbox" />
  </div>
</template>

<style>
html, body { margin: 0; background: #f2f2f2; }

/* toolbar parts are drawn from data by a render function, so they sit in the plain block */
.band { display: flex; align-items: center; height: 26px; box-sizing: border-box; padding-left: 3px; flex: none;
  background: linear-gradient(#fdfdfd, #f1f1f1); border-radius: 2px; }
.band.plain { background: none; }
.b1a { padding-left: 6px; }
.b1a .tool { margin-right: 6px; }
.band-more { margin-left: auto; padding-right: 3px; align-self: flex-start; font-size: 12px; font-weight: 700; line-height: 12px; color: #222; }
.tool { display: inline-flex; align-items: center; height: 22px; margin-right: 8px; white-space: nowrap; color: #1a1a1a; font-size: 12px; }
.tool .ic { margin-right: 4px; }
.tool.bare .ic { margin-right: 0; }
.tool.off { color: #a0a0a0; }
.tool.off .ic { opacity: .75; }
.tool.on { background: #dceaf6; box-shadow: inset 0 0 0 1px #0a78d2; padding: 0 3px 0 4px; margin-left: -4px; margin-right: 5px; }
.ic { width: 16px; height: 16px; flex: none; overflow: visible; }
.caret { display: inline-block; width: 0; height: 0; margin-left: 6px; border: 3px solid transparent; border-top: 3px solid #222; border-bottom: 0; flex: none; }
.caret.solo { margin: 0 4px 0 0; }
.b1a .caret.solo { margin-right: 8px; }
.sep { display: inline-block; width: 1px; height: 20px; background: #b8b8b8; margin-right: 5px; flex: none; }
.grip { display: inline-block; width: 2px; height: 16px; margin-right: 3px; flex: none;
  background: repeating-linear-gradient(#999 0 2px, transparent 2px 4px); }
.combo { display: inline-flex; align-items: center; justify-content: space-between; height: 22px; box-sizing: border-box; padding: 0 5px 0 2px;
  background: #fff; font-size: 12px; color: #111; flex: none; }
.combo + .sep { margin-left: 5px; }
.combo.boxed { border: 1px solid #777; background: #f4f4f4; }
.combo.boxed .caret { border-top-color: #888; margin-left: auto; }
.plan-over { fill: #2fb52f; }
</style>

<style scoped>
.screen { position: relative; width: 1366px; height: 768px; overflow: hidden; display: flex; flex-direction: column;
  background: #f2f2f2; font-family: "Noto Sans CJK SC", "Liberation Sans", sans-serif; font-size: 12px; color: #1a1a1a; }
.mono { font-family: "Liberation Mono", monospace; font-size: 11px; letter-spacing: -.6px; }

.titlebar { height: 23px; background: #fff; display: flex; align-items: center; flex: none; padding-left: 3px; }
.logo { width: 14px; height: 14px; margin-right: 6px; }
.title-text { font-size: 12.5px; white-space: nowrap; flex: 1; overflow: hidden; }
.winctl { display: flex; flex: none; margin-left: 300px; margin-right: 2px; }
.winctl svg { width: 46px; height: 23px; }

.menubar { height: 27px; flex: none; display: flex; align-items: center; padding-left: 7px; background: linear-gradient(#fafafa, #f2f2f2); }
.menu { margin-right: 10.5px; white-space: nowrap; }
.menu-icon { display: inline-flex; align-items: center; white-space: nowrap; margin-right: 9px; }
.menu-icon .ic { margin-right: 3px; }
.menu-icon.first { margin-left: -1px; }
.ask { width: 183px; height: 27px; line-height: 27px; box-sizing: border-box; padding-left: 26px; color: #0b5f6b; background: #fafafa; }
.user-box { display: flex; align-items: center; margin-left: 2px; width: 224px; height: 26px; padding-left: 6px; box-sizing: border-box; background: linear-gradient(#fdfdfd, #f1f1f1); }
.user-box .ic { margin-right: 4px; }
.phone { font-size: 12px; letter-spacing: .1px; }
.beans { margin-left: 9px; }
.bell { width: 12px; height: 18px; margin-left: 10px; }
.more { font-size: 12px; font-weight: 700; color: #222; margin-left: auto; padding-right: 3px; line-height: 10px; align-self: flex-start; padding-top: 6px; }

.toolrow { display: flex; align-items: center; flex: none; box-sizing: border-box; }
.row1 { height: 32px; padding-top: 2px; }
.workspace { flex: 1; display: flex; min-height: 0; }

.nav { width: 166px; flex: none; padding-top: 2px; box-sizing: border-box; margin-right: 4px; display: flex; flex-direction: column; background: #f0f0f0; }
.nav-title { height: 15px; background: #0a5ce0; color: #fff; font-size: 13px; line-height: 15px; display: flex; justify-content: space-between; width: 165px; }
.nav-title svg { width: 30px; height: 15px; }
.nav-btn { height: 21px; line-height: 19px; width: 165px; box-sizing: border-box; text-align: center; border: 1px solid #a8a8a8; border-radius: 1px; margin-top: 1px; background: #f0f0f0; color: #222; flex: none; }
.nav-title + .nav-btn { margin-top: 2px; }
.tree-panel { height: 515px; width: 165px; box-sizing: border-box; border: 1px solid #a8a8a8; margin-top: 1px; display: flex; flex-direction: column; background: #f0f0f0; flex: none; }
.tree-head { height: 26px; padding: 5px 0 0 4px; box-sizing: border-box; flex: none; }
.tree-head svg { width: 44px; height: 18px; }
.tree-body { margin: 0 1px 0 2px; border: 1px solid #888; border-top: 0; height: 485px; box-sizing: border-box; background: #fff; display: flex; flex-direction: column; }
.tree-list { display: flex; flex: 1; min-height: 0; }
.tree-clip { flex: 1; overflow: hidden; height: 468px; padding-top: 1px; box-sizing: border-box; }
.tree-row { height: 16px; display: flex; align-items: center; white-space: nowrap; font-size: 12px; }
.guide { width: 20px; height: 16px; margin-left: 11px; box-sizing: border-box; border-left: 1px dotted #777; flex: none; }
.guide.dash { width: 11px; margin-left: 0; background: linear-gradient(to right, #777 50%, transparent 50%) 0 50% / 2px 1px repeat-x; }
.tree-label { margin-left: 4px; padding-right: 3px; }
.tree-label.sel { background: #d6d6d6; padding: 0 4px; margin-left: 0; }
.chev { width: 9px; height: 6px; margin-left: 6px; flex: none; }
.dots.short { width: 7px; height: 1px; flex: none; background: linear-gradient(to right, #777 50%, transparent 50%) 0 0 / 2px 1px repeat-x; }
.tree-folder { margin-left: 5px; }
.vscroll { width: 15px; flex: none; background: #f0f0f0; display: flex; flex-direction: column; }
.vscroll svg { width: 15px; height: 15px; flex: none; }
.vtrack { flex: 1; }
.vthumb { height: 196px; margin-top: 146px; background: #cdcdcd; }
.hscroll { height: 16px; display: flex; align-items: center; background: #f0f0f0; flex: none; }
.hscroll svg { width: 15px; height: 15px; flex: none; }
.htrack { flex: 1; }
.hthumb { height: 16px; background: #cdcdcd; }
.tree-h .hthumb { width: 102px; margin-left: 4px; }

.main { flex: 1; min-width: 0; display: flex; flex-direction: column; }
.row2 { height: 27px; padding-top: 1px; }
.row3 { height: 28px; }
.row4 { height: 31px; padding-bottom: 1px; }
.tail-grip { display: flex; align-items: center; height: 26px; margin-left: 6px; }
.tail-grip .grip { margin-right: 2px; }
.tail-grip span { width: 23px; height: 26px; background: #fdfdfd; }
.canvas { display: block; width: 1196px; height: 305px; flex: none; font-family: "Liberation Sans", "Noto Sans CJK SC", sans-serif; }
.plan-text { fill: #555; }
.big { filter: blur(.35px); }

.snapbar { height: 30px; padding-bottom: 2px; font-size: 12px; }
.snapbar .combo.flat { width: 57px; margin-left: 10px; margin-right: 6px; padding-left: 2px; }
.snapbar .sep { margin-right: 2px; margin-left: 0; }
.grey { color: #999; width: 18px; flex: none; }
.grey.tight { margin-left: 3px; width: 20px; }
.spin { display: flex; width: 56px; height: 22px; flex: none; box-sizing: border-box; border: 1px solid #999; background: #f0f0f0; }
.spin b { flex: 1; font-weight: 400; text-align: right; padding-right: 5px; line-height: 20px; }
.spin em { width: 11px; flex: none; background: #f7f7f7; border-left: 1px solid #ddd; }
.spin.w68 { width: 68px; margin-left: 5px; }
.unit { margin-left: 3px; flex: none; color: #333; }
.unit.wide { margin-left: 7px; }
.check { width: 11px; height: 11px; box-sizing: border-box; border: 1px solid #777; background: #fff; margin-left: 7px; flex: none; }

.grid-area { flex: 1; min-height: 0; display: flex; background: #f0f0f0; }
.side-strip { width: 12px; flex: none; padding: 3px 0 0 1px; box-sizing: border-box; display: flex; flex-direction: column; }
.side-strip svg { width: 11px; height: 11px; flex: none; }
.strip-dots { flex: 1; margin: 4px 2px 0; background: radial-gradient(#aaa 1px, transparent 1.200px) 0 0 / 4px 4px; }
.grid-main { flex: 1; min-width: 0; display: flex; flex-direction: column; background: #fff; padding-bottom: 1px; }
.table-tools { height: 30px; background: #f4f4f4; padding-left: 3px; }
.table-wrap { flex: 1; overflow: hidden; border-top: 1px solid #aaa; }
.rebar { table-layout: fixed; border-collapse: collapse; width: 1184px; font-size: 12px; }
.rebar th { height: 19px; box-sizing: border-box; padding: 0; font-weight: 400; text-align: center; color: #222; white-space: nowrap; overflow: hidden;
  background: linear-gradient(#fefefe, #ececec); border: 1px solid #c4c4c4; border-top: 0; line-height: 18px; }
.rebar th.active { background: #f9cd84; color: #6b0f6b; }
.unit-head { font-size: 10px; }
.rebar td { padding: 0 0 0 1px; border: 1px solid #c4c4c4; white-space: nowrap; overflow: hidden; }
.rebar .filled td { height: 27px; background: #c9fcd5; }
.rebar .blank td { height: 19px; background: #fff; }
.rebar td.rowhead { text-align: center; background: #f0f0f0; }
.rebar td.rowhead.on { background: #fdd28c; color: #6b0f6b; }
.rebar td.cur { background: #aeead9; border-left: 1px solid #000; }
.rebar td.mark { border-left: 1px solid #000; }
.rebar td.ctr { text-align: center; }
.grade { font-size: 11px; color: #222; }
.rebar td.shape { text-align: center; vertical-align: top; }
.shape-label { color: #e01818; font-size: 10px; line-height: 11px; margin-top: 5px; font-family: "Liberation Sans", sans-serif; }
.shape-line { width: 150px; height: 2px; background: #000; margin: 2px auto 0 22px; }
.grid-h { height: 16px; border-top: 1px solid #aaa; box-sizing: content-box; border-bottom: 1px solid #aaa; }
.grid-h .hthumb { width: 760px; margin-left: 4px; }

.statusbar { height: 22px; flex: none; display: flex; gap: 2px; padding-top: 1px; box-sizing: border-box; background: #f0f0f0; }
.cell { height: 20px; line-height: 19px; box-sizing: border-box; padding-left: 2px; background: linear-gradient(#fafafa, #f2f2f2); border: 1px solid #dcdcdc; white-space: nowrap; flex: none; }
.c1 { width: 148px; }
.c2 { width: 78px; }
.c3 { width: 98px; }
.c4 { width: 48px; }
.c5 { width: 914px; }
.c6 { width: 68px; }

.taskbar { height: 40px; flex: none; display: flex; background: #06181f; color: #eee; }
.start { width: 48px; flex: none; background: #050505; display: flex; align-items: center; justify-content: center; }
.start svg { width: 17px; height: 17px; }
.search { width: 343px; flex: none; background: #f2f2f2; display: flex; align-items: center; color: #333; font-size: 14px; }
.ring { width: 14px; height: 14px; border: 3px solid #222; border-radius: 50%; margin-left: 9px; flex: none; }
.search-text { margin-left: 11px; flex: 1; }
.search svg { width: 12px; height: 18px; margin-right: 14px; }
.task { width: 51px; flex: none; display: flex; align-items: center; justify-content: center; box-sizing: border-box; position: relative; }
.task.running::after { content: ""; position: absolute; left: 5px; right: 5px; bottom: 0; height: 2px; background: #76b9ed; }
.task svg { width: 24px; height: 24px; }
.task.view svg { width: 17px; height: 17px; }
.task.bird svg { width: 28px; }
.task.pdf { margin-left: -3px; }
.pdf-tag { position: absolute; left: 17px; top: 14px; font-size: 9px; font-weight: 700; color: #fff; font-family: "Liberation Sans", sans-serif; }
.tray { display: flex; align-items: center; margin-left: 101px; flex: none; }
.tray-up { width: 17px; height: 40px; background: #f0f0f0; flex: none; display: flex; flex-direction: column; justify-content: space-between; align-items: center; padding: 5px 0; box-sizing: border-box; }
.tray-up svg { width: 12px; height: 12px; }
.slot { display: flex; align-items: center; justify-content: center; flex: none; text-align: center; height: 40px; }
.w46 { width: 46px; }
.w40 { width: 40px; }
.w86 { width: 86px; }
.w15 { width: 15px; }
.w30 { width: 30px; }
.w22 { width: 22px; }
.w26 { width: 26px; }
.w20 { width: 20px; }
.w32 { width: 32px; }
.w80 { width: 80px; }
.w34 { width: 34px; }
.cpu, .clock { line-height: 18px; display: block; font-size: 12px; padding-top: 2px; box-sizing: border-box; }
.ime { font-size: 14px; }
.action { position: relative; }
.badge { position: absolute; left: 15px; top: 20px; width: 17px; height: 17px; line-height: 17px; border-radius: 50%; background: #444; color: #fff; font-size: 11px; }

.ball { position: absolute; left: 717px; top: -27px; width: 46px; height: 46px; border-radius: 50%; background: #43a92b; color: #fff; font-weight: 700; font-size: 11px;
  text-align: center; line-height: 12px; padding-top: 28px; box-sizing: border-box; box-shadow: 0 1px 3px 2px rgba(90, 90, 90, .55); }
.ime-bar { position: absolute; left: 785px; top: 4px; width: 185px; height: 23px; box-sizing: border-box; border: 1px solid #b8cfe6; background: #fff; display: flex; align-items: center; padding-left: 12px; gap: 6px; }
.ime-bar svg { width: 16px; height: 16px; flex: none; }
.ime-bar .ime-s { position: absolute; left: -22px; top: -5px; width: 28px; height: 28px; }
.ime-en { color: #2a72c8; font-size: 14px; }
.ime-dot { color: #2a72c8; width: 16px; font-weight: 700; text-align: center; }
.redbox { position: absolute; left: 392px; top: 541px; width: 218px; height: 82px; box-sizing: border-box; border: 7px solid #f00; pointer-events: none; }
</style>
